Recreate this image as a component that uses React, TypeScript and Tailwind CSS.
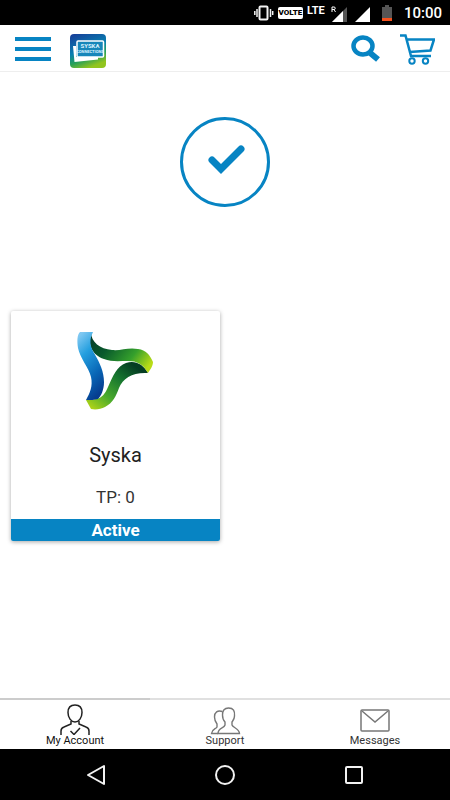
import type { ReactNode } from 'react';
import clsx from 'clsx';

const tabs = [
  { label: 'My Account', href: '#account', icon: <AccountIcon />, active: true },
  { label: 'Support', href: '#support', icon: <SupportIcon />, active: false },
  { label: 'Messages', href: '#messages', icon: <MailIcon />, active: false },
];

function StatusBar() {
  return (
    <div className="flex h-[25px] items-center justify-end bg-black pr-2 text-white">
      <svg width="20" height="16" viewBox="0 0 20 16" fill="none" stroke="#f2f2f2" strokeWidth="1.5">
        <rect x="5.5" y="1.5" width="8" height="13" rx="1" strokeWidth="2" />
        <path d="M3 4v8M16.500 4v8M.8 6v4M18.700 6v4" />
      </svg>
      <span className="ml-1 flex h-3 w-[25px] items-center justify-center rounded-xs bg-white text-[8px] font-black text-black">
        VOLTE
      </span>
      <span className="mb-1 ml-1 w-5 text-[11px] leading-5 font-bold">LTE</span>
      <svg className="ml-1" width="16" height="18" viewBox="0 0 16 18">
        <path d="M16 3v15H1z" fill="#555" />
        <path d="M12 7v11H1z" fill="#fff" />
        <path d="M1 8V3h2a1.200 1.200 0 0 1 0 2.500H1m2 0L4.500 8" fill="none" stroke="#fff" strokeWidth="1" />
      </svg>
      <svg className="ml-2" width="15" height="18" viewBox="0 0 15 18">
        <path d="M15 3v15H0z" fill="#fff" />
      </svg>
      <svg className="ml-3" width="10" height="16" viewBox="0 0 10 16">
        <path d="M3 0h4v2h3v14H0V2h3z" fill="#555" />
        <path d="M0 13h10v3H0z" fill="#f4511e" />
      </svg>
      <span className="ml-3 pt-px text-[15px] font-medium">10:00</span>
    </div>
  );
}

function AppLogo() {
  return (
    <svg width="36" height="34" viewBox="0 0 36 34" aria-label="Syska Connections" role="img">
      <defs>
        <linearGradient id="tile" x1="0.1" y1="0" x2="0.5" y2="1">
          <stop offset="0" stopColor="#173f99" />
          <stop offset="0.5" stopColor="#087fb0" />
          <stop offset="0.75" stopColor="#269f58" />
          <stop offset="1" stopColor="#91c51e" />
        </linearGradient>
      </defs>
      <rect width="36" height="34" rx="4" fill="url(#tile)" />
      <path d="M3 12h3v11h22v2.500L4.500 28z" fill="#fff" />
      <rect x="7" y="7" width="26.500" height="16" rx="1" fill="#1686b9" stroke="#fff" strokeWidth="1.500" />
      <g fill="#d9f2ff" fontFamily="Roboto, sans-serif" fontWeight="700" textAnchor="middle">
        <text x="20" y="14" fontSize="6">SYSKA</text>
        <text x="20" y="19" fontSize="4">CONNECTIONS</text>
      </g>
    </svg>
  );
}

function Header() {
  return (
    <header className="flex h-[47px] items-center border-b border-[#eeeeee] px-[15px] pt-0.5 text-[#0784c3]">
      <button aria-label="Open menu">
        <svg width="36" height="24" viewBox="0 0 36 24" fill="currentColor">
          <path d="M0 0h36v4H0zM0 10h36v4H0zM0 20h36v4H0z" />
        </svg>
      </button>
      <a href="#home" className="mt-1 ml-[19px]">
        <AppLogo />
      </a>
      <button className="ml-auto" aria-label="Search">
        <svg width="31" height="28" viewBox="0 0 31 28" fill="none" stroke="currentColor">
          <ellipse cx="13" cy="11" rx="9.500" ry="8.500" strokeWidth="4.500" />
          <path d="m19 17 9 7.500" strokeWidth="6" />
        </svg>
      </button>
      <a href="#cart" className="ml-[19px]" aria-label="Cart">
        <svg width="35" height="31" viewBox="0 0 35 31" fill="none" stroke="currentColor" strokeWidth="2.500">
          <path d="M0 1.500h5.500L11 22h20M6.500 5.500H34L30.500 16.500 9.500 18" />
          <circle cx="12" cy="27" r="2.700" strokeWidth="2" />
          <circle cx="25.500" cy="27" r="2.700" strokeWidth="2" />
        </svg>
      </a>
    </header>
  );
}

function SyskaMark() {
  return (
    <svg width="78" height="80" viewBox="0 0 78 80" aria-label="Syska" role="img">
      <defs>
        <linearGradient id="blue" x1="0.2" y1="0" x2="0.6" y2="1">
          <stop offset="0" stopColor="#7fc8f2" />
          <stop offset="0.3" stopColor="#249fdf" />
          <stop offset="0.7" stopColor="#0865b5" />
          <stop offset="1" stopColor="#063c8e" />
        </linearGradient>
        <linearGradient id="top" x1="0" y1="0.2" x2="1" y2="0.7">
          <stop offset="0" stopColor="#063f29" />
          <stop offset="0.3" stopColor="#08592c" />
          <stop offset="0.7" stopColor="#35a02c" />
          <stop offset="1" stopColor="#b9dc16" />
        </linearGradient>
        <linearGradient id="bottom" x1="0" y1="1" x2="1" y2="0">
          <stop offset="0" stopColor="#c4dc13" />
          <stop offset="0.3" stopColor="#4bab2c" />
          <stop offset="0.6" stopColor="#16752f" />
          <stop offset="0.85" stopColor="#053d23" />
        </linearGradient>
      </defs>
      <path d="M71 42C66 33 58 29 49 32c-9 3-13 13-18 24-3 7-6 11-12 12-3 1-6 1-10 1l5 9c5 1 10 0 14-2 8-4 11-11 14-19 4-10 14-16 29-15z" fill="url(#bottom)" />
      <path d="M14 1c0 10 9 17 21 18 9 1 16-3 26-1 8 1 12 6 15 13 0 4-3 8-5 11-5-9-11-12-20-12-9 0-17 1-24-2C15 24 10 13 14 1z" fill="url(#top)" />
      <path d="M3 1h13c-4 8-3 14 1 21 6 10 10 19 10 29 0 8-3 14-6 17-4 1-7 1-12 1 4-7 7-14 5-23C12 37 3 27 1 17 0 10 0 4 3 1z" fill="url(#blue)" />
    </svg>
  );
}

function AccountIcon() {
  return (
    <svg width="30" height="32" viewBox="0 0 30 32" fill="none" stroke="#222" strokeWidth="1.500">
      <path d="M15 2c5 0 7 3 7 7.500 0 5-3 9.500-7 9.500s-7-4.500-7-9.500C8 5 10 2 15 2z" />
      <path d="M11 18v3l-7 3q-3 1-3 4v4M19 18v3l7 3q3 1 3 4v4" />
      <path d="m10.500 28 3.500 3.500 6-6.500" />
    </svg>
  );
}

function SupportIcon() {
  return (
    <svg width="31" height="28" viewBox="0 0 31 28" fill="none" stroke="#777" strokeWidth="1.400">
      <path d="M18.500 1c5 0 6.500 3 6 8 0 3-1 4-2.500 6v3c1 3 7 3 7.500 8.500H8c0-6 6-5 7-8.500v-3c-2-2-2.500-4-2.500-7 0-5 2-7 6-7z" />
      <path d="M12.500 4.500C7.500 3 4.500 5 4.500 10c0 3 1 5 2.500 7v3c-1 2-5 2-5.500 6.500H8" />
    </svg>
  );
}

function MailIcon() {
  return (
    <svg className="mb-[3px]" width="30" height="23" viewBox="0 0 30 23" fill="none" stroke="#777" strokeWidth="1.500">
      <rect x="1" y="1" width="28" height="21" rx="1" />
      <path d="m2 2 13 11L28 2" />
    </svg>
  );
}

function Tab({ label, href, icon, active }: { label: string; href: string; icon: ReactNode; active: boolean }) {
  return (
    <a
      href={href}
      className={clsx(
        'flex h-[51px] flex-1 flex-col items-center border-t-2',
        active ? 'border-[#cccccc] text-[#111111]' : 'border-[#e0e0e0] text-[#333333]',
      )}
    >
      <span className="flex h-[35px] items-end">{icon}</span>
      <span className="text-[11px] leading-3">{label}</span>
    </a>
  );
}

function SystemNav() {
  return (
    <div className="flex h-[51px] items-center justify-center gap-[105px] bg-black text-[#f2f2f2]">
      <button aria-label="Back">
        <svg width="24" height="24" viewBox="0 0 24 24" fill="none" stroke="currentColor" strokeWidth="2" strokeLinejoin="round">
          <path d="M20 3v18L4 12z" />
        </svg>
      </button>
      <button aria-label="Home">
        <svg width="24" height="24" viewBox="0 0 24 24" fill="none" stroke="currentColor" strokeWidth="2">
          <circle cx="12" cy="12" r="9" />
        </svg>
      </button>
      <button aria-label="Recent apps">
        <svg width="24" height="24" viewBox="0 0 24 24" fill="none" stroke="currentColor" strokeWidth="2">
          <rect x="4" y="4" width="16" height="16" rx="1" />
        </svg>
      </button>
    </div>
  );
}

export default function App() {
  return (
    <div className="flex min-h-screen flex-col bg-white font-['Roboto',sans-serif]">
      <StatusBar />
      <Header />

      <main className="flex-1 px-[11px] pt-[45px]">
        <svg className="mx-auto" width="90" height="90" viewBox="0 0 90 90" fill="none" stroke="#0784c3">
          <circle cx="45" cy="45" r="43.500" strokeWidth="3" />
          <path d="m32 43 9 9 20-20" strokeWidth="7" strokeLinecap="round" />
        </svg>

        <div className="mt-[104px] grid grid-cols-2 gap-[10px]">
          <a
            href="#syska"
            className="flex flex-col items-center overflow-hidden rounded-xs pt-5 shadow-[0_1px_4px_rgba(0,0,0,0.35)]"
          >
            <SyskaMark />
            <h2 className="mt-8 text-xl leading-6 text-[#222222]">Syska</h2>
            <p className="mt-5 text-[17px] leading-5 text-[#333333]">TP: 0</p>
            <span className="mt-3 w-full bg-[#0784c3] text-center text-[17px] leading-[22px] font-bold text-white">
              Active
            </span>
          </a>
        </div>
      </main>

      <nav className="flex">
        {tabs.map((t) => (
          <Tab key={t.label} {...t} />
        ))}
      </nav>
      <SystemNav />
    </div>
  );
}
